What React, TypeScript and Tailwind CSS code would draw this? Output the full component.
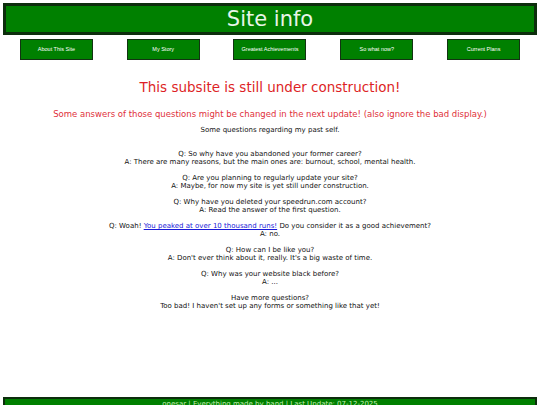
import React from "react";

const navItems = ["About This Site", "My Story", "Greatest Achievements", "So what now?", "Current Plans"];

const qa: [React.ReactNode, string][] = [
  ["Q: So why have you abandoned your former career?", "A: There are many reasons, but the main ones are: burnout, school, mental health."],
  ["Q: Are you planning to regularly update your site?", "A: Maybe, for now my site is yet still under construction."],
  ["Q: Why have you deleted your speedrun.com account?", "A: Read the answer of the first question."],
  [
    <>
      Q: Woah!{" "}
      <a href="#" className="text-[#1a1ad8] underline">
        You peaked at over 10 thousand runs!
      </a>{" "}
      Do you consider it as a good achievement?
    </>,
    "A: no.",
  ],
  ["Q: How can I be like you?", "A: Don't ever think about it, really. It's a big waste of time."],
  ["Q: Why was your website black before?", "A: ..."],
  ["Have more questions?", "Too bad! I haven't set up any forms or something like that yet!"],
];

export default function App() {
  return (
    <div className="w-[540px] h-[405px] overflow-hidden bg-white px-[3px] pt-[3px] font-['DejaVu_Sans',Verdana,sans-serif]">
      <header className="h-[32px] border-[3px] border-[#0d2e0d] bg-[#008000] flex items-center justify-center">
        <h1 className="text-[21px] leading-none text-[#e8f5e8]">Site info</h1>
      </header>
      <nav className="mt-[4px] flex justify-around">
        {navItems.map((n) => (
          <div
            key={n}
            className="w-[73px] h-[21px] border border-[#123312] bg-[#008000] flex items-center justify-center text-[5.5px] text-white font-['Liberation_Sans',Arial,sans-serif]"
          >
            {n}
          </div>
        ))}
      </nav>
      <main className="flex flex-col items-center text-center">
        <h2 className="mt-[19px] text-[13.5px] leading-[16px] text-[#dd1f26]">This subsite is still under construction!</h2>
        <p className="mt-[14px] text-[8.5px] leading-[10px] text-[#e0303a]">
          Some answers of those questions might be changed in the next update! (also ignore the bad display.)
        </p>
        <p className="mt-[7px] text-[7px] leading-[8px] text-[#111]">Some questions regarding my past self.</p>
        <div className="mt-[16px] flex flex-col gap-[8px] text-[7px] leading-[8px] text-[#111]">
          {qa.map(([q, a], i) => (
            <div key={i}>
              <div>{q}</div>
              <div>{a}</div>
            </div>
          ))}
        </div>
      </main>
      <footer className="mt-[87px] h-[14px] border-[2px] border-[#0d2e0d] bg-[#008000] text-center text-[7px] leading-[10px] text-[#c4f0b4]">
        onesar | Everything made by hand | Last Update: 07-12-2025
      </footer>
    </div>
  );
}
